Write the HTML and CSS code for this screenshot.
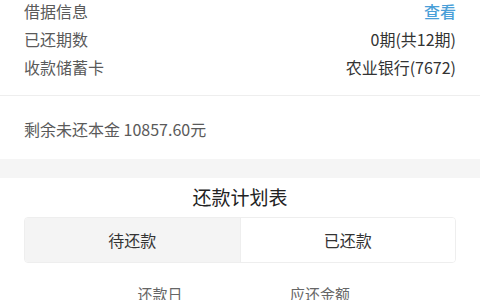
FILE: index.html
```html
<!DOCTYPE html>
<html lang="zh-CN">
<head>
<meta charset="utf-8">
<link rel="stylesheet" href="styles.css">
</head>
<body>
<div class="info">
  <div class="row"><span class="label">借据信息</span><span class="link">查看</span></div>
  <div class="row"><span class="label">已还期数</span><span class="value">0期(共12期)</span></div>
  <div class="row"><span class="label">收款储蓄卡</span><span class="value">农业银行(7672)</span></div>
</div>
<div class="remain">剩余未还本金 10857.60元</div>
<div class="band"></div>
<div class="plan">
  <div class="title">还款计划表</div>
  <div class="tabs">
    <div class="tab active">待还款</div>
    <div class="tab">已还款</div>
  </div>
  <div class="head"><span>还款日</span><span>应还金额</span></div>
</div>
</body>
</html>
```
FILE: styles.css
```css
html, body {
  margin: 0;
  padding: 0;
  background: #fff;
  font-family: "Noto Sans CJK SC", "Noto Sans", sans-serif;
  width: 480px;
  height: 300px;
  overflow: hidden;
}
.info {
  margin-top: -3px;
  padding: 0 24px 14px;
}
.row {
  display: flex;
  justify-content: space-between;
  align-items: center;
  height: 28px;
  font-size: 16px;
  line-height: 28px;
}
.label { color: #5a5a5a; }
.value { color: #333; }
.link { color: #4a9fd8; font-weight: 500; }
.remain {
  border-top: 1px solid #eeeeee;
  padding: 19px 24px 16px;
  font-size: 16px;
  line-height: 28px;
  color: #5a5a5a;
}
.band {
  height: 19px;
  background: #f5f5f5;
}
.plan {
  padding: 5px 24px 0;
}
.title {
  text-align: center;
  font-size: 19px;
  line-height: 28px;
  color: #222;
  font-weight: 400;
}
.tabs {
  margin-top: 6px;
  display: flex;
  height: 46px;
  border: 1px solid #eeeeee;
  border-radius: 4px;
  overflow: hidden;
  box-sizing: border-box;
}
.tab {
  flex: 1;
  display: flex;
  align-items: center;
  justify-content: center;
  font-size: 16px;
  color: #333;
  background: #fff;
}
.tab.active {
  background: #f4f4f4;
  border-right: 1px solid #eeeeee;
}
.head {
  margin: 17px -24px 0;
  padding: 0 80px;
  display: grid;
  grid-template-columns: 1fr 1fr;
  text-align: center;
  font-size: 15px;
  line-height: 28px;
  color: #666;
}
```
